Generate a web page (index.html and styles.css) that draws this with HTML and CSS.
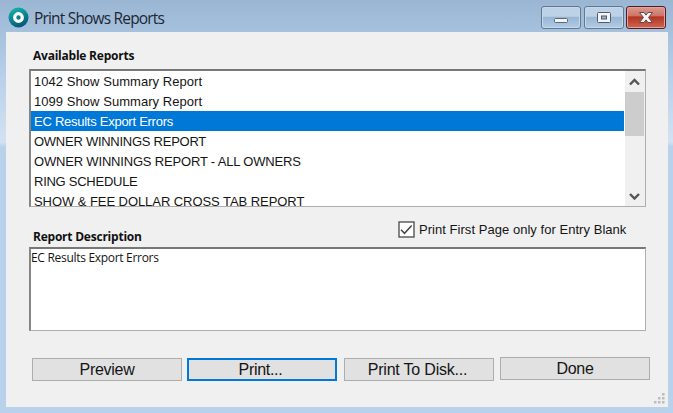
FILE: index.html
```html
<!DOCTYPE html>
<html lang="en">
<head>
<meta charset="utf-8">
<title>Print Shows Reports</title>
<link rel="stylesheet" href="styles.css">
</head>
<body>
<div class="window">
  <header class="titlebar">
    <svg class="logo" width="21" height="21" viewBox="0 0 21 21">
      <defs><linearGradient id="teal" x1="0" y1="0" x2="0.4" y2="1"><stop offset="0" stop-color="#16bdb4"/><stop offset="1" stop-color="#075b77"/></linearGradient></defs>
      <circle cx="10.5" cy="10.5" r="10" fill="url(#teal)"/>
      <circle cx="10.5" cy="10.5" r="3.8" fill="#0a7f90" stroke="#fff" stroke-width="3.2"/>
    </svg>
    <h1 class="title">Print Shows Reports</h1>
    <div class="controls">
      <button class="control" aria-label="Minimize"><svg width="38" height="20"><rect x="12.5" y="10.5" width="13" height="4" rx="1" fill="#f4f4f4" stroke="#5b6878"/></svg></button>
      <button class="control" aria-label="Maximize"><svg width="38" height="20"><rect x="12.5" y="4.500" width="13" height="10" rx="1" fill="#f4f4f4" stroke="#4e5b6c"/><rect x="16.500" y="8" width="5" height="3" fill="#9bb5d1" stroke="#4e5b6c"/></svg></button>
      <button class="control close" aria-label="Close"><svg width="38" height="20"><path d="M12.500 4.500h4.500l2 2.600 2-2.600h4.500l-4 5 4 5h-4.500l-2-2.600-2 2.600h-4.500l4-5z" fill="#f5f5f5" stroke="#674650" stroke-linejoin="round"/></svg></button>
    </div>
  </header>
  <main class="panel">
    <h2 class="label available">Available Reports</h2>
    <div class="listbox">
      <ul class="items">
        <li class="loose">1042 Show Summary Report</li>
        <li class="loose">1099 Show Summary Report</li>
        <li class="selected">EC Results Export Errors</li>
        <li>OWNER WINNINGS REPORT</li>
        <li class="owners">OWNER WINNINGS REPORT - ALL OWNERS</li>
        <li>RING SCHEDULE</li>
        <li class="crosstab">SHOW &amp; FEE DOLLAR CROSS TAB REPORT</li>
      </ul>
      <div class="scrollbar">
        <svg width="19" height="21"><path d="M5 13.500l4.500-4.500 4.500 4.500" fill="none" stroke="#555" stroke-width="2.400"/></svg>
        <div class="thumb"></div>
        <svg class="down" width="19" height="21"><path d="M5 9l4.500 4.500L14 9" fill="none" stroke="#555" stroke-width="2.400"/></svg>
      </div>
    </div>
    <div class="midrow">
      <h2 class="label desc">Report Description</h2>
      <div class="check">
        <svg width="17" height="17"><rect x="1" y="1" width="15" height="15" fill="#fff" stroke="#484848" stroke-width="1.300"/><path d="M3 8.700l3.500 3.600L13.700 4.500" fill="none" stroke="#454545" stroke-width="1.500"/></svg>
        <span class="checktext">Print First Page only for Entry Blank</span>
      </div>
    </div>
    <div class="description">EC Results Export Errors</div>
    <div class="actions">
      <button class="btn">Preview</button>
      <button class="btn default">Print...</button>
      <button class="btn disk">Print To Disk...</button>
      <button class="btn done">Done</button>
    </div>
    <svg class="grip" width="11" height="11" fill="#bdbdbd"><path d="M8 0h2.500v2.500H8zM8 4h2.500v2.500H8zM4 4h2.500v2.500H4zM8 8h2.500v2.500H8zM4 8h2.500v2.500H4zM0 8h2.500v2.500H0z"/></svg>
  </main>
</div>
</body>
</html>
```
FILE: styles.css
```css
* { box-sizing: border-box; }
body { margin: 0; }
h1, h2, ul { margin: 0; padding: 0; font-weight: normal; }
svg { display: block; flex: none; }
button { font: inherit; color: inherit; padding: 0; }

.window {
  width: 673px;
  height: 413px;
  padding: 0 5px 6px 6px;
  overflow: hidden;
  font-family: "Liberation Sans", Arial, sans-serif;
  color: #151515;
  white-space: nowrap;
  background: linear-gradient(#9bb6d3 0, #a6c1de 32px, #b9d1ea 80px, #d3e2f2 142px, #b9d1ea 147px, #b9d1ea);
}

.titlebar { display: flex; height: 32px; padding-left: 2px; }
.logo { margin-top: 7px; }
.title {
  margin: 6px 0 0 5px;
  font: 15.5px/24px "Open Sans", "Noto Sans", sans-serif;
  letter-spacing: -0.82px;
  color: #1c2733;
}
.controls { display: flex; gap: 2.5px; margin: 6px 2px 0 auto; }
.control {
  width: 40px;
  height: 23px;
  border: 1px solid #61788f;
  border-radius: 3px;
  box-shadow: inset 0 0 0 1px #c5d9ed;
  background: linear-gradient(#bdd1e7 0 45%, #98b4d1 46%, #b2cce7);
}
.close {
  border-color: #541b27;
  box-shadow: inset 0 0 0 1px #e0a69f;
  background: linear-gradient(#dc9a8d 0, #cc7365 44%, #b33422 46%, #cf6550);
}

.panel { height: 375px; padding: 14px 0 0 23px; background: #f0f0f0; position: relative; }
.label { font: bold 12px/20px "Open Sans", "Noto Sans", sans-serif; letter-spacing: -0.23px; color: #111; }
.available { margin-left: 4px; }

.listbox, .description {
  width: 617px;
  border: 1px solid #aeaeae;
  border-top: 2px solid #777;
  border-left: 2px solid #858585;
  background: #fff;
}
.listbox { display: flex; height: 138px; margin-top: 3px; overflow: hidden; }
.items { flex: 1; list-style: none; font-size: 13px; letter-spacing: -0.26px; }
.items li { height: 20px; padding-left: 3px; line-height: 22px; }
.items .loose { letter-spacing: 0.05px; }
.items .owners { letter-spacing: -0.18px; }
.items .crosstab { height: 15px; letter-spacing: -0.06px; }
.items .selected { margin-right: 1px; color: #fff; background: #0078d7; }
.scrollbar { display: flex; flex-direction: column; width: 20px; background: #f0f0f0; }
.thumb { width: 19px; height: 44px; background: #cdcdcd; }
.down { margin-top: auto; }

.midrow { display: flex; height: 40px; padding-left: 4px; }
.desc { margin-top: 20px; width: 365px; }
.check { display: flex; gap: 4px; padding-top: 14px; }
.checktext { font-size: 13px; line-height: 17px; letter-spacing: 0.04px; }

.description { height: 84px; font: 12px/17px "Open Sans", "Noto Sans", sans-serif; letter-spacing: -0.3px; }
.actions { display: flex; gap: 6px; padding: 27px 0 0 3px; }
.btn {
  width: 150px;
  height: 23px;
  border: 1px solid #adadad;
  background: #e1e1e1;
  font-size: 16px;
  line-height: 20px;
  letter-spacing: -0.3px;
}
.default { border: 2px solid #0078d7; line-height: 18px; margin: 0 1px 0 -1px; padding-right: 3px; }
.disk { letter-spacing: -0.2px; padding-right: 3px; }
.done { margin-top: -1px; }
.grip { position: absolute; right: 3px; bottom: 3px; }
```
